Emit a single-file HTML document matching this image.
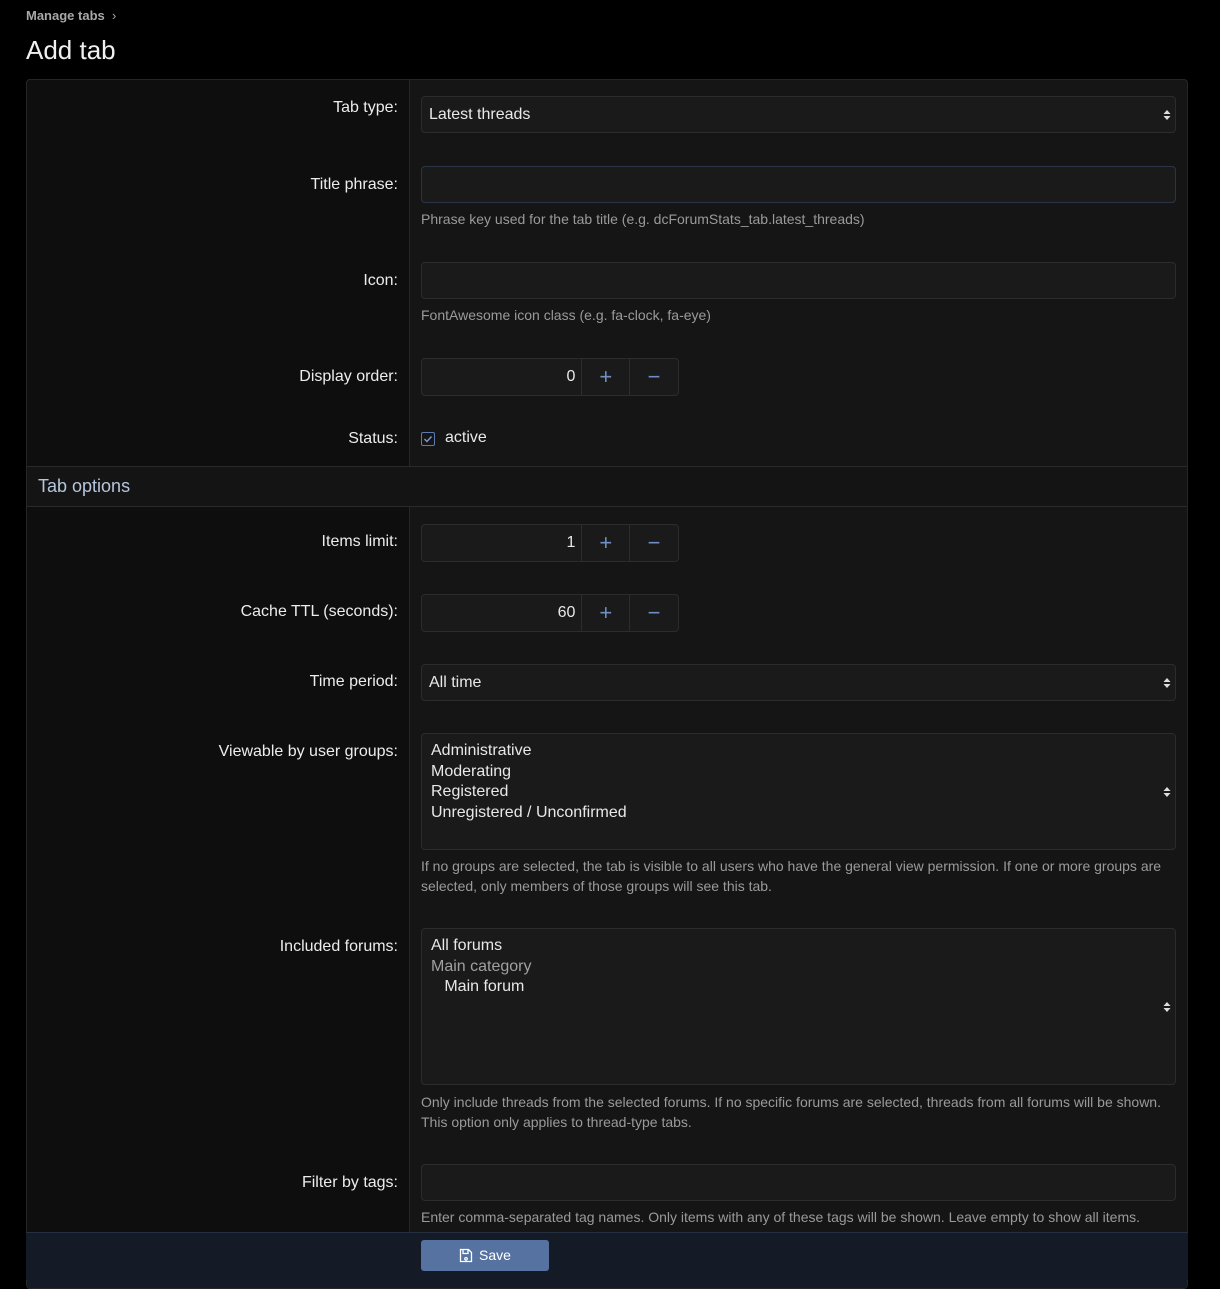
<!DOCTYPE html>
<html><head><meta charset="utf-8"><style>
*{margin:0;padding:0;box-sizing:border-box}
body{width:1220px;height:1280px;background:#000;font-family:"Liberation Sans",Arial,sans-serif;color:#e8e8e8;position:relative;overflow:hidden}
.a{position:absolute}
.lbl{position:absolute;right:822px;font-size:16px;color:#ececec;text-align:right;white-space:nowrap;line-height:20px}
.inp{position:absolute;left:421px;width:755px;background:#1a1a1a;border:1px solid #2c2c2c;border-radius:4px}
.help{position:absolute;left:421px;font-size:14px;color:#9a9a9a;line-height:20px;width:760px}
.arr{position:absolute;right:4px;top:50%;transform:translateY(-50%);width:8px;height:12px}
.num{position:absolute;left:421px;width:258px;height:38px;border:1px solid #2c2c2c;border-radius:4px;background:#1a1a1a;display:flex}
.num .v{width:161px;text-align:right;padding-right:6px;line-height:36px;font-size:16px;border-right:1px solid #2c2c2c}
.num .b{width:48px;text-align:center;line-height:35px;font-size:22px;color:#6f8fc4;border-right:1px solid #2c2c2c}
.num .b:last-child{border-right:none}
.opt{font-size:16px;line-height:20.5px}
</style></head><body>
<div class="a" style="left:26px;top:8px;font-size:13px;font-weight:bold;color:#a8a8a8">Manage tabs &nbsp;<span style="font-weight:normal">›</span></div>
<div class="a" style="left:26px;top:35px;font-size:26px;color:#f0f0f0">Add tab</div>

<div class="a" style="left:26px;top:79px;width:1162px;height:1210px;background:#151515;border:1px solid #262626;border-radius:4px;overflow:hidden">
 <div class="a" style="left:0;top:0;width:383px;height:387px;background:#0e0e0e;border-right:1px solid #262626"></div>
 <div class="a" style="left:0;top:386px;width:1162px;height:41px;background:#141414;border-top:1px solid #2a2a2a;border-bottom:1px solid #2a2a2a"></div>
 <div class="a" style="left:11px;top:396px;font-size:18px;color:#b6c5dc">Tab options</div>
 <div class="a" style="left:0;top:427px;width:383px;height:800px;background:#0e0e0e;border-right:1px solid #262626"></div>
 <div class="a" style="left:0;top:1152px;width:1162px;height:60px;background:#141b26;border-top:1px solid #263040"></div>
</div>

<div class="lbl" style="top:98px">Tab type:</div>
<div class="inp" style="top:96px;height:37px"><span class="a" style="left:7px;top:9px;font-size:16px">Latest threads</span><svg class="arr" viewBox="0 0 8 12"><path d="M4 1L7.5 5H.5zM4 11L7.5 7H.5z" fill="#ddd"/></svg></div>

<div class="lbl" style="top:175px">Title phrase:</div>
<div class="inp" style="top:166px;height:37px;border-color:#2b3446"></div>
<div class="help" style="top:209px">Phrase key used for the tab title (e.g. dcForumStats_tab.latest_threads)</div>

<div class="lbl" style="top:271px">Icon:</div>
<div class="inp" style="top:262px;height:37px"></div>
<div class="help" style="top:305px">FontAwesome icon class (e.g. fa-clock, fa-eye)</div>

<div class="lbl" style="top:367px">Display order:</div>
<div class="num" style="top:358px"><div class="v">0</div><div class="b">+</div><div class="b">−</div></div>

<div class="lbl" style="top:429px">Status:</div>
<div class="a" style="left:421px;top:432px;width:14px;height:14px;border:1.5px solid #5d7bb0;border-radius:2px"><svg class="a" style="left:1px;top:1px" width="10" height="10" viewBox="0 0 10 10"><path d="M1.5 5l2.5 2.5 4.5-5" stroke="#7d9bd0" stroke-width="1.4" fill="none"/></svg></div>
<div class="a" style="left:445px;top:429px;font-size:16px">active</div>

<div class="lbl" style="top:532px">Items limit:</div>
<div class="num" style="top:524px"><div class="v">1</div><div class="b">+</div><div class="b">−</div></div>

<div class="lbl" style="top:602px">Cache TTL (seconds):</div>
<div class="num" style="top:594px"><div class="v">60</div><div class="b">+</div><div class="b">−</div></div>

<div class="lbl" style="top:672px">Time period:</div>
<div class="inp" style="top:664px;height:37px"><span class="a" style="left:7px;top:9px;font-size:16px">All time</span><svg class="arr" viewBox="0 0 8 12"><path d="M4 1L7.5 5H.5zM4 11L7.5 7H.5z" fill="#ddd"/></svg></div>

<div class="lbl" style="top:742px">Viewable by user groups:</div>
<div class="inp" style="top:733px;height:117px"><div class="a opt" style="left:9px;top:7px">Administrative<br>Moderating<br>Registered<br>Unregistered / Unconfirmed</div><svg class="arr" viewBox="0 0 8 12"><path d="M4 1L7.5 5H.5zM4 11L7.5 7H.5z" fill="#ddd"/></svg></div>
<div class="help" style="top:856px">If no groups are selected, the tab is visible to all users who have the general view permission. If one or more groups are selected, only members of those groups will see this tab.</div>

<div class="lbl" style="top:937px">Included forums:</div>
<div class="inp" style="top:928px;height:157px"><div class="a opt" style="left:9px;top:7px">All forums<br><span style="color:#a0a0a0">Main category</span><br>&nbsp;&nbsp;&nbsp;Main forum</div><svg class="arr" viewBox="0 0 8 12"><path d="M4 1L7.5 5H.5zM4 11L7.5 7H.5z" fill="#ddd"/></svg></div>
<div class="help" style="top:1092px">Only include threads from the selected forums. If no specific forums are selected, threads from all forums will be shown. This option only applies to thread-type tabs.</div>

<div class="lbl" style="top:1173px">Filter by tags:</div>
<div class="inp" style="top:1164px;height:37px"></div>
<div class="help" style="top:1207px">Enter comma-separated tag names. Only items with any of these tags will be shown. Leave empty to show all items.</div>

<div class="a" style="left:26px;top:1232px;width:1162px;height:48px;background:#141b26;border-top:1px solid #263040"></div>
<div class="a" style="left:421px;top:1240px;width:128px;height:31px;background:#5672a1;border-radius:3px;font-size:14px;color:#fff;line-height:31px;text-align:center"><svg style="vertical-align:-3px;margin-right:6px" width="14" height="15" viewBox="0 0 14 15"><path d="M1.5 1.5h8l3 3v9h-11z M4 1.5v4h5v-4 M7 9.5a1.3 1.3 0 1 0 .01 0" stroke="#fff" stroke-width="1.3" fill="none"/></svg>Save</div>
</body></html>
